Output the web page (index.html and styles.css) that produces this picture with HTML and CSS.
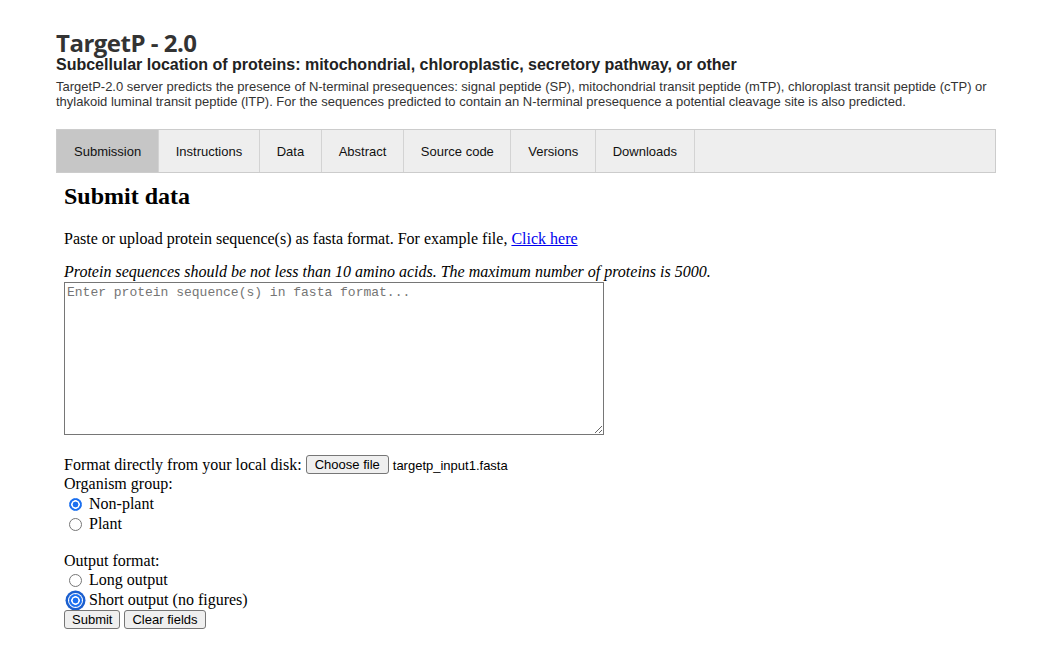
FILE: index.html
```html
<!DOCTYPE html>
<html>
<head>
<meta charset="utf-8">
<title>TargetP - 2.0</title>
<link rel="stylesheet" href="styles.css">
</head>
<body>
<div class="page">
  <header class="header">
    <h1 class="title">TargetP - 2.0</h1>
    <div class="subtitle">Subcellular location of proteins: mitochondrial, chloroplastic, secretory pathway, or other</div>
    <p class="desc">TargetP-2.0 server predicts the presence of N-terminal presequences: signal peptide (SP), mitochondrial transit peptide (mTP), chloroplast transit peptide (cTP) or thylakoid luminal transit peptide (lTP). For the sequences predicted to contain an N-terminal presequence a potential cleavage site is also predicted.</p>
  </header>
  <nav class="tabs">
    <a class="tab active">Submission</a>
    <a class="tab">Instructions</a>
    <a class="tab">Data</a>
    <a class="tab">Abstract</a>
    <a class="tab">Source code</a>
    <a class="tab">Versions</a>
    <a class="tab">Downloads</a>
  </nav>
  <main class="content">
    <h2 class="heading">Submit data</h2>
    <p class="intro">Paste or upload protein sequence(s) as fasta format. For example file, <a href="#" class="link">Click here</a></p>
    <p class="note">Protein sequences should be not less than 10 amino acids. The maximum number of proteins is 5000.</p>
    <textarea class="seq" placeholder="Enter protein sequence(s) in fasta format..."></textarea>
    <div class="line file-line">Format directly from your local disk: <button class="btn" type="button">Choose file</button> <span class="filename">targetp_input1.fasta</span></div>
    <div class="line">Organism group:</div>
    <label class="radio-line"><input type="radio" name="org" checked class="radio"><span>Non-plant</span></label>
    <label class="radio-line"><input type="radio" name="org" class="radio"><span>Plant</span></label>
    <div class="line gap">Output format:</div>
    <label class="radio-line"><input type="radio" name="out" class="radio"><span>Long output</span></label>
    <label class="radio-line"><input type="radio" name="out" checked class="radio focused"><span>Short output (no figures)</span></label>
    <div class="buttons"><button class="btn small" type="button">Submit</button><button class="btn small" type="button">Clear fields</button></div>
  </main>
</div>
</body>
</html>
```
FILE: styles.css
```css
html, body {
  margin: 0;
  padding: 0;
  background: #fff;
}
body {
  font-family: "Liberation Serif", "Times New Roman", serif;
  font-size: 16px;
  color: #000;
}
.page {
  width: 940px;
  margin-left: 56px;
}
.header {
  padding-top: 30px;
}
.title {
  margin: 0;
  font-family: "Open Sans", "DejaVu Sans", sans-serif;
  font-weight: 700;
  font-size: 24px;
  line-height: 26px;
  color: #333;
  letter-spacing: -0.5px;
}
.subtitle {
  margin-top: 1px;
  font-family: "Liberation Sans", Arial, sans-serif;
  font-weight: 700;
  font-size: 16px;
  line-height: 16px;
  color: #222;
}
.desc {
  margin: 6px 0 0;
  font-family: "Liberation Sans", Arial, sans-serif;
  font-size: 13px;
  line-height: 15px;
  color: #333;
}
.tabs {
  margin-top: 20px;
  display: flex;
  height: 42px;
  border: 1px solid #ccc;
  background: #eee;
}
.tab {
  display: flex;
  align-items: center;
  padding: 0 16.5px 0 17px;
  border-right: 1px solid #d3d3d3;
  font-family: "Liberation Sans", Arial, sans-serif;
  font-size: 13px;
  color: #111;
}
.tab.active {
  background: #c6c6c6;
}
.content {
  padding-left: 8px;
}
.heading {
  margin: 9px 0 0;
  font-size: 24px;
  line-height: 28px;
  font-weight: 700;
}
.intro {
  margin: 19px 0 0;
  line-height: 20px;
}
.link {
  color: #0000ee;
  text-decoration: underline;
}
.note {
  margin: 13px 0 0;
  line-height: 20px;
  font-style: italic;
}
.seq {
  display: block;
  box-sizing: border-box;
  width: 540px;
  height: 153px;
  margin: 0;
  padding: 2px;
  border: 1px solid #767676;
  font-family: "Liberation Mono", "Courier New", monospace;
  font-size: 13px;
  resize: both;
}
.seq::placeholder {
  color: #757575;
}
.line {
  line-height: 20px;
}
.file-line {
  margin-top: 20px;
  line-height: 19px;
  height: 19px;
}
.gap {
  margin-top: 17px;
  line-height: 19px;
}
.filename {
  font-family: "Liberation Sans", Arial, sans-serif;
  font-size: 13px;
}
.btn {
  font-family: "Liberation Sans", Arial, sans-serif;
  font-size: 13px;
  line-height: 15px;
  height: 19px;
  padding: 0 8px;
  margin: 0;
  border: 1px solid #767676;
  border-radius: 3px;
  background: #efefef;
  color: #000;
  vertical-align: 1px;
}
.btn.small {
  padding: 0 7px;
}
.radio-line {
  display: flex;
  align-items: center;
  height: 20px;
  line-height: 20px;
}
.radio {
  appearance: none;
  -webkit-appearance: none;
  box-sizing: border-box;
  width: 13px;
  height: 13px;
  margin: 0 7px 0 5px;
  border: 1px solid #767676;
  border-radius: 50%;
  background: #fff;
}
.radio:checked {
  border-color: #1a6ff0;
  background: radial-gradient(circle, #1a6ff0 0 2.6px, #fff 3.2px 4px, #1a6ff0 4.6px);
}
.radio.focused {
  box-shadow: 0 0 0 1px #fff, 0 0 0 3.5px #1b5fcf;
}
.buttons {
  display: flex;
  gap: 4px;
  margin-top: 0;
}
```
